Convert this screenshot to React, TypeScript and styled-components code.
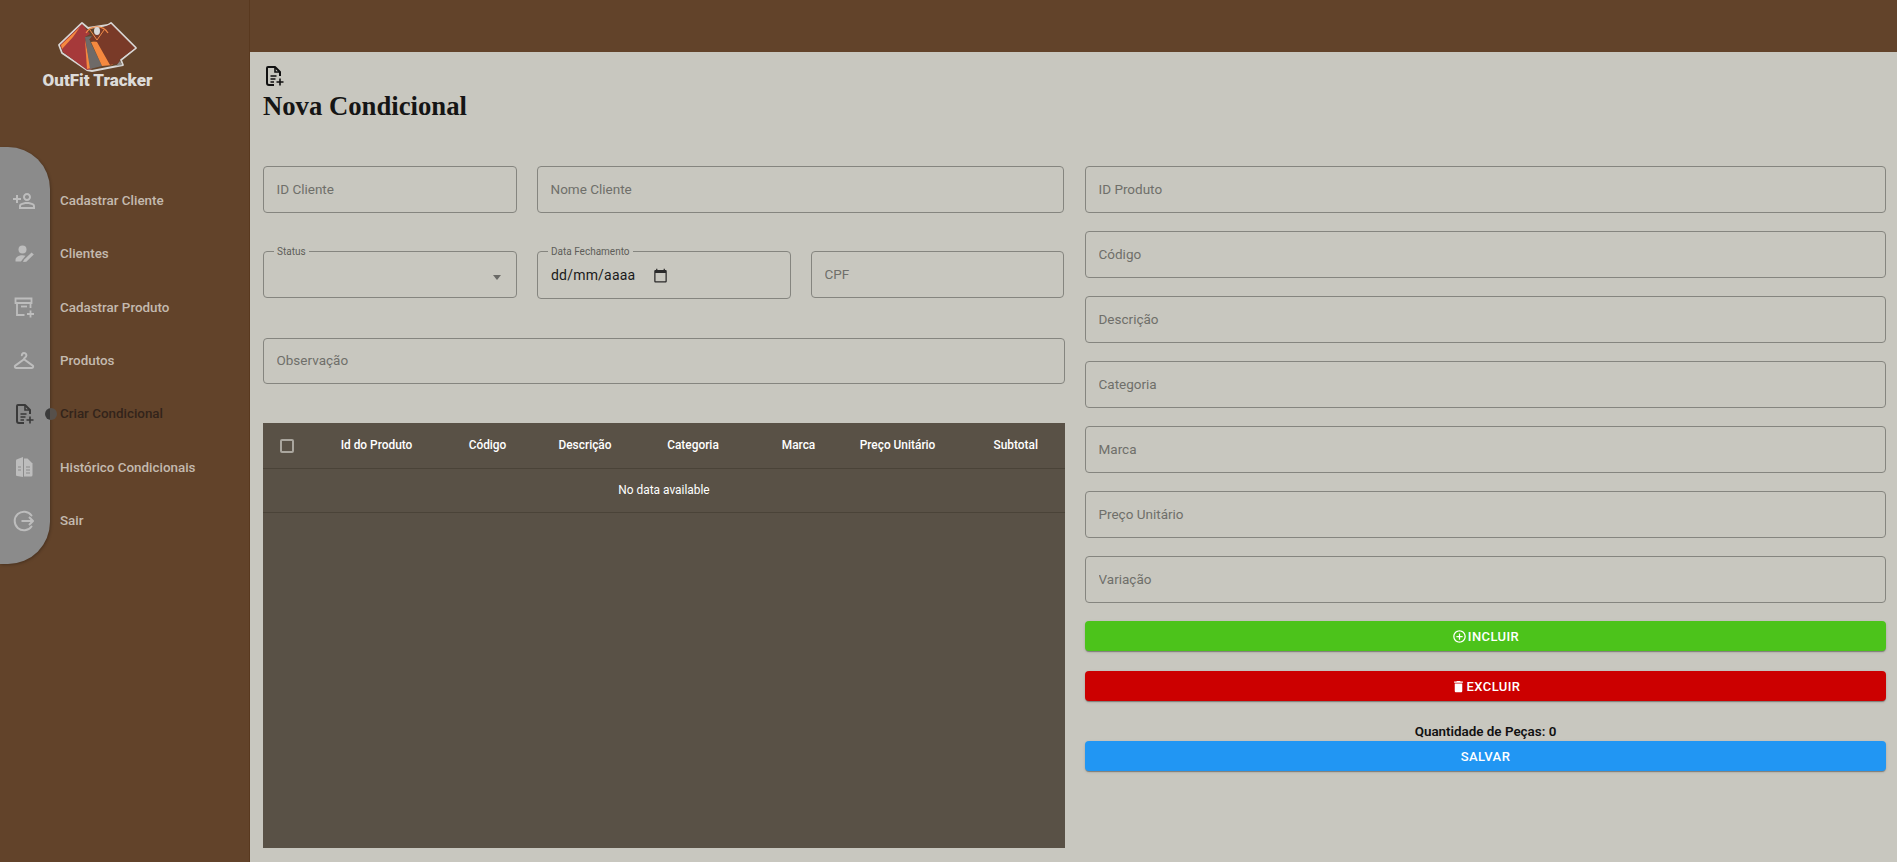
import { FC, ReactNode } from "react";
import styled, { createGlobalStyle } from "styled-components";
import { MdAddCircleOutline, MdDelete, MdOutlinePersonAddAlt } from "react-icons/md";

const GlobalStyle = createGlobalStyle`
  html, body {
    margin: 0;
    height: 100%;
    background: #c8c7bf;
    font-family: Roboto, "Liberation Sans", sans-serif;
  }
  * { box-sizing: border-box; }
`;

const NoteAddIcon: FC = () => (
  <svg width="24" height="24" viewBox="0 0 24 24" fill="none" stroke="currentColor" strokeWidth="2">
    <path d="M12 21H7a2 2 0 0 1-2-2V4a1 1 0 0 1 1-1h7l5 5v4" strokeLinejoin="round" />
    <path d="M13 3v5h5" strokeWidth="1.6" />
    <path d="M8.5 12h6M8.5 15h5M8.5 18h3.5" strokeWidth="1.5" />
    <path d="M18 14.5v7M14.5 18h7" strokeWidth="1.6" />
  </svg>
);

const PersonEditIcon: FC = () => (
  <svg width="24" height="24" viewBox="0 0 24 24" fill="currentColor">
    <circle cx="10.5" cy="7.5" r="4" />
    <path d="M3.5 19.5v-1.6c0-2.8 3.4-4.6 7-4.6 1.1 0 2.1.2 3 .4l-4.6 5.8z" />
    <path d="M12 19.8l7.6-7.4 2.2 2.2-7.5 7.1-3.3.4z" transform="translate(0 -2)" />
  </svg>
);

const ArchiveAddIcon: FC = () => (
  <svg width="24" height="24" viewBox="0 0 24 24" fill="none" stroke="currentColor" strokeWidth="1.8">
    <path d="M3.5 3.5h16v4.5h-16zM5 8v12h7.5M18.5 8v5" />
    <path d="M9 11.5h6" />
    <path d="M18.5 15.5v7M15 19h7" />
  </svg>
);

const HangerIcon: FC = () => (
  <svg width="24" height="24" viewBox="0 0 24 24" fill="none" stroke="currentColor" strokeWidth="2">
    <path d="M9.8 6.200a2.300 2.300 0 1 1 3.400 2.100c-.8.500-1.200 1-1.200 2" strokeLinecap="round" />
    <path d="M12 10.200l8.700 6.400c.9.700.5 2.400-.8 2.400H4.100c-1.300 0-1.700-1.700-.8-2.400z" strokeLinejoin="round" />
  </svg>
);

const ReceiptDocIcon: FC = () => (
  <svg width="24" height="24" viewBox="0 0 24 24" fill="currentColor">
    <path d="M4.500 4.500l6.500-2.500v20l-6-1c-.6-.1-1-.5-1-1.100V5.500c0-.4.200-.8.500-1z" />
    <path d="M12 3.500h3.500l5 5V20a1.500 1.500 0 0 1-1.500 1.500h-7z" />
    <path d="M6 12h3M6 15h3M14 12h4M14 15h4M14 18h4" stroke="#8b8b8b" strokeWidth="1.200" />
  </svg>
);

const LogoutIcon: FC = () => (
  <svg width="24" height="24" viewBox="0 0 24 24" fill="none" stroke="currentColor" strokeWidth="2">
    <path d="M19.500 6.500A9.300 9.300 0 1 0 19.500 17.500" strokeLinecap="round" />
    <path d="M9.500 12H21M17 8l4 4-4 4" strokeLinejoin="round" />
  </svg>
);

// viewBox uses the picture's own pixel coordinates, easier to compare against the reference
const Logo: FC = () => (
  <svg width="85" height="56" viewBox="55 18 85 56">
    <path d="M82 23L59 45l3 8 25 17 5 1 31-6-2-5 15-12-25-25-3 2-20 3z" fill="#62432a" stroke="#d8d6d4" strokeWidth="1.800" strokeLinejoin="round" />
    <path d="M82 24L60 45l3 7 24 18 5-1-7-32 5-3z" fill="#a6393a" />
    <path d="M80 27L61 45l1 4 11-12z" fill="#f5893f" />
    <path d="M85 40l2 29 4-1z" fill="#f5893f" />
    <path d="M85 37l7-1-2 5 12 25-12 3z" fill="#6e6a68" />
    <path d="M91 42l6-1 16 24-11 1z" fill="#f5893f" />
    <path d="M111 24l24 24-16 12 1 3-10 2-13-23-8-2 3-4 7-7z" fill="#793a28" />
    <path d="M120 61l2 4-6 1z" fill="#8d8a88" />
    <path d="M86 33a13 13 0 0 1 22 0" fill="none" stroke="#f08a48" strokeWidth="1.200" />
    <path d="M90 30l7 10 7-10" fill="none" stroke="#f08a48" strokeWidth="1" />
    <ellipse cx="97" cy="31" rx="3" ry="4" fill="#d9d9d9" />
  </svg>
);

const NAV_ITEMS: { label: string; icon: ReactNode; active?: boolean }[] = [
  { label: "Cadastrar Cliente", icon: <PersonAddIcon size={24} /> },
  { label: "Clientes", icon: <PersonEditIcon /> },
  { label: "Cadastrar Produto", icon: <ArchiveAddIcon /> },
  { label: "Produtos", icon: <HangerIcon /> },
  { label: "Criar Condicional", icon: <NoteAddIcon />, active: true },
  { label: "Histórico Condicionais", icon: <ReceiptDocIcon /> },
  { label: "Sair", icon: <LogoutIcon /> }
];

const COLUMNS = [
  { label: "Id do Produto", width: 131 },
  { label: "Código", width: 91 },
  { label: "Descrição", width: 104 },
  { label: "Categoria", width: 112 },
  { label: "Marca", width: 99 },
  { label: "Preço Unitário", width: 99 }
];

const PRODUCT_FIELDS = ["ID Produto", "Código", "Descrição", "Categoria", "Marca", "Preço Unitário", "Variação"];

const App: FC = () => (
  <Page>
    <GlobalStyle />
    <Sidebar>
      <Brand>
        <Logo />
        <BrandName>OutFit Tracker</BrandName>
      </Brand>
      <Nav>
        <Rail>
          {NAV_ITEMS.map((item) => (
            <RailIcon key={item.label} $active={item.active}>
              {item.icon}
            </RailIcon>
          ))}
        </Rail>
        <Labels>
          {NAV_ITEMS.map((item) => (
            <NavLabel key={item.label} $active={item.active}>
              {item.active && <ActiveDot />}
              {item.label}
            </NavLabel>
          ))}
        </Labels>
      </Nav>
    </Sidebar>
    <Column>
      <TopBar />
      <Content>
        <PageHeader>
          <HeaderIcon>
            <NoteAddIcon />
          </HeaderIcon>
          <Title>Nova Condicional</Title>
        </PageHeader>
        <FormGrid>
          <LeftColumn>
            <RowOne>
              <Field placeholder="ID Cliente" />
              <Field placeholder="Nome Cliente" />
            </RowOne>
            <RowTwo>
              <Outlined $height={53}>
                <Legend>Status</Legend>
                <SelectArrow />
              </Outlined>
              <Outlined $height={54}>
                <Legend>Data Fechamento</Legend>
                <DateText>dd/mm/aaaa</DateText>
                <CalendarIcon viewBox="0 0 24 24" fill="currentColor">
                  <path d="M20 3h-1V1h-2v2H7V1H5v2H4c-1.100 0-2 .9-2 2v16c0 1.100.9 2 2 2h16c1.100 0 2-.9 2-2V5c0-1.100-.9-2-2-2zm0 18H4V8h16v13z" />
                </CalendarIcon>
              </Outlined>
              <Field placeholder="CPF" />
            </RowTwo>
            <NoteField placeholder="Observação" />
            <TableWrap>
              <Table>
                <colgroup>
                  <col width={48} />
                  {COLUMNS.map((col) => (
                    <col key={col.label} width={col.width} />
                  ))}
                  <col />
                </colgroup>
                <thead>
                  <tr>
                    <HeadCell>
                      <Checkbox />
                    </HeadCell>
                    {COLUMNS.map((col) => (
                      <HeadCell key={col.label}>{col.label}</HeadCell>
                    ))}
                    <HeadCell $end>Subtotal</HeadCell>
                  </tr>
                </thead>
                <tbody>
                  <tr>
                    <EmptyCell colSpan={8}>No data available</EmptyCell>
                  </tr>
                </tbody>
              </Table>
            </TableWrap>
          </LeftColumn>
          <RightColumn>
            {PRODUCT_FIELDS.map((name) => (
              <Field key={name} placeholder={name} />
            ))}
            <ActionButton $color="#4cc31b">
              <MdAddCircleOutline size={15} />
              Incluir
            </ActionButton>
            <ActionButton $color="#cc0000">
              <MdDelete size={15} />
              Excluir
            </ActionButton>
            <Summary>
              <Quantity>Quantidade de Peças: 0</Quantity>
              <ActionButton $color="#2196f3">Salvar</ActionButton>
            </Summary>
          </RightColumn>
        </FormGrid>
      </Content>
    </Column>
  </Page>
);

function PersonAddIcon({ size }: { size: number }) {
  return <MirroredIcon size={size} />;
}

const MirroredIcon = styled(MdOutlinePersonAddAlt)`
  transform: scaleX(-1);
`;

const Page = styled.div`
  display: flex;
  width: 1897px;
  height: 862px;
  overflow: hidden;
`;

const Sidebar = styled.aside`
  width: 250px;
  flex: none;
  background: #62432a;
  border-right: 1px solid #59391f;
`;

const Brand = styled.div`
  display: flex;
  flex-direction: column;
  align-items: center;
  width: 195px;
  height: 147px;
  padding-top: 18px;
`;

const BrandName = styled.div`
  margin-top: -4px;
  font: 900 17px Roboto, sans-serif;
  color: #dddbd9;
  line-height: 20px;
`;

const Nav = styled.nav`
  display: flex;
`;

const Rail = styled.div`
  width: 50px;
  padding: 27px 0 17px;
  background: #8b8b8b;
  border-radius: 0 42px 42px 0;
  box-shadow: 1px 1px 3px rgba(0, 0, 0, 0.25);
`;

const RailIcon = styled.div<{ $active?: boolean }>`
  display: flex;
  align-items: center;
  justify-content: center;
  height: 53.33px;
  padding-right: 2px;
  color: ${(p) => (p.$active ? "#3a3a3a" : "#bdbdbd")};
`;

const Labels = styled.div`
  padding: 27px 0 0 10px;
`;

const NavLabel = styled.div<{ $active?: boolean }>`
  position: relative;
  display: flex;
  align-items: center;
  height: 53.33px;
  font-size: 13.4px;
  font-weight: 500;
  color: ${(p) => (p.$active ? "#33241a" : "#c4baaf")};
`;

const ActiveDot = styled.span`
  position: absolute;
  left: -15px;
  top: 21px;
  width: 12px;
  height: 12px;
  border-radius: 50%;
  background: linear-gradient(90deg, #3b3b3b 42%, #56504b 42%);
`;

const Column = styled.div`
  flex: 1;
  display: flex;
  flex-direction: column;
  min-width: 0;
`;

const TopBar = styled.header`
  height: 52px;
  flex: none;
  background: #62432a;
`;

const Content = styled.main`
  flex: 1;
  padding: 12px 11px 0 13px;
  background: #c8c7bf;
`;

const PageHeader = styled.div`
  height: 102px;
`;

const HeaderIcon = styled.div`
  height: 26px;
  margin-left: -1px;
  color: #111;
`;

const Title = styled.h1`
  margin: 0;
  font: 700 26.7px/32px "Liberation Serif", serif;
  color: #151515;
`;

const FormGrid = styled.div`
  display: grid;
  grid-template-columns: 802px 801px;
  gap: 20px;
`;

const LeftColumn = styled.div`
  display: flex;
  flex-direction: column;
  gap: 40px;
`;

const RowOne = styled.div`
  display: grid;
  grid-template-columns: 254px 1fr;
  gap: 20px;
  padding-right: 1px;
  margin-bottom: -2px;
`;

const RowTwo = styled.div`
  display: grid;
  grid-template-columns: 254px 254px 1fr;
  gap: 20px;
  align-items: start;
  height: 47px;
  padding-right: 1px;
`;

const Field = styled.input`
  width: 100%;
  height: 47px;
  padding: 0 12.5px 2px;
  background: transparent;
  border: 1px solid #85857f;
  border-radius: 4px;
  outline: none;
  font: 400 13.5px Roboto, sans-serif;
  &::placeholder {
    color: #6f6f6a;
    opacity: 1;
  }
`;

const NoteField = styled(Field)`
  height: 46px;
  margin-bottom: -1px;
`;

const Outlined = styled.fieldset<{ $height: number }>`
  position: relative;
  display: flex;
  align-items: center;
  height: ${(p) => p.$height}px;
  margin: -6px 0 0;
  padding: 0 13px 5px;
  border: 1px solid #85857f;
  border-radius: 4px;
`;

const Legend = styled.legend`
  margin-left: -3px;
  padding: 2px 3px 0;
  font-size: 10px;
  line-height: 10px;
  color: #5e5e59;
`;

const SelectArrow = styled.span`
  position: absolute;
  right: 15px;
  top: 18px;
  border-left: 4.500px solid transparent;
  border-right: 4.500px solid transparent;
  border-top: 5px solid #6a6a66;
`;

const DateText = styled.span`
  font-size: 14px;
  letter-spacing: 0.2px;
  color: #1a1a1a;
`;

const CalendarIcon = styled.svg`
  width: 15px;
  height: 15px;
  margin-left: 18px;
  color: #2a2a2a;
`;

const TableWrap = styled.div`
  height: 425px;
  background: #595146;
`;

const Table = styled.table`
  width: 100%;
  table-layout: fixed;
  border-collapse: collapse;
  color: #fff;
  font-size: 11.9px;
`;

const HeadCell = styled.th<{ $end?: boolean }>`
  height: 45px;
  padding: 0 ${(p) => (p.$end ? "27px" : "0")} 0 0;
  text-align: ${(p) => (p.$end ? "right" : "center")};
  font-weight: 500;
  border-bottom: 1px solid #4a4338;
`;

const Checkbox = styled.span`
  display: inline-block;
  width: 14px;
  height: 14px;
  vertical-align: middle;
  border: 2px solid #aaa69e;
  border-radius: 2px;
`;

const EmptyCell = styled.td`
  height: 44px;
  text-align: center;
  border-bottom: 1px solid #4a4338;
`;

const RightColumn = styled.div`
  display: flex;
  flex-direction: column;
  gap: 18px;
`;

const ActionButton = styled.button<{ $color: string }>`
  display: flex;
  align-items: center;
  justify-content: center;
  gap: 1px;
  width: 100%;
  height: 30px;
  padding: 0;
  flex: none;
  color: #fff;
  background: ${(p) => p.$color};
  border: none;
  border-radius: 4px;
  font: 500 13px Roboto, sans-serif;
  letter-spacing: 0.4px;
  text-transform: uppercase;
  box-shadow: 0 2px 1px -1px rgba(0, 0, 0, 0.2), 0 1px 1px 0 rgba(0, 0, 0, 0.14), 0 1px 3px 0 rgba(0, 0, 0, 0.12);
  & + & {
    margin-top: 2px;
  }
`;

const Summary = styled.div`
  margin-top: 4px;
`;

const Quantity = styled.div`
  height: 18px;
  line-height: 18px;
  text-align: center;
  font-size: 13.4px;
  font-weight: 600;
  color: #111;
`;

export default App;
